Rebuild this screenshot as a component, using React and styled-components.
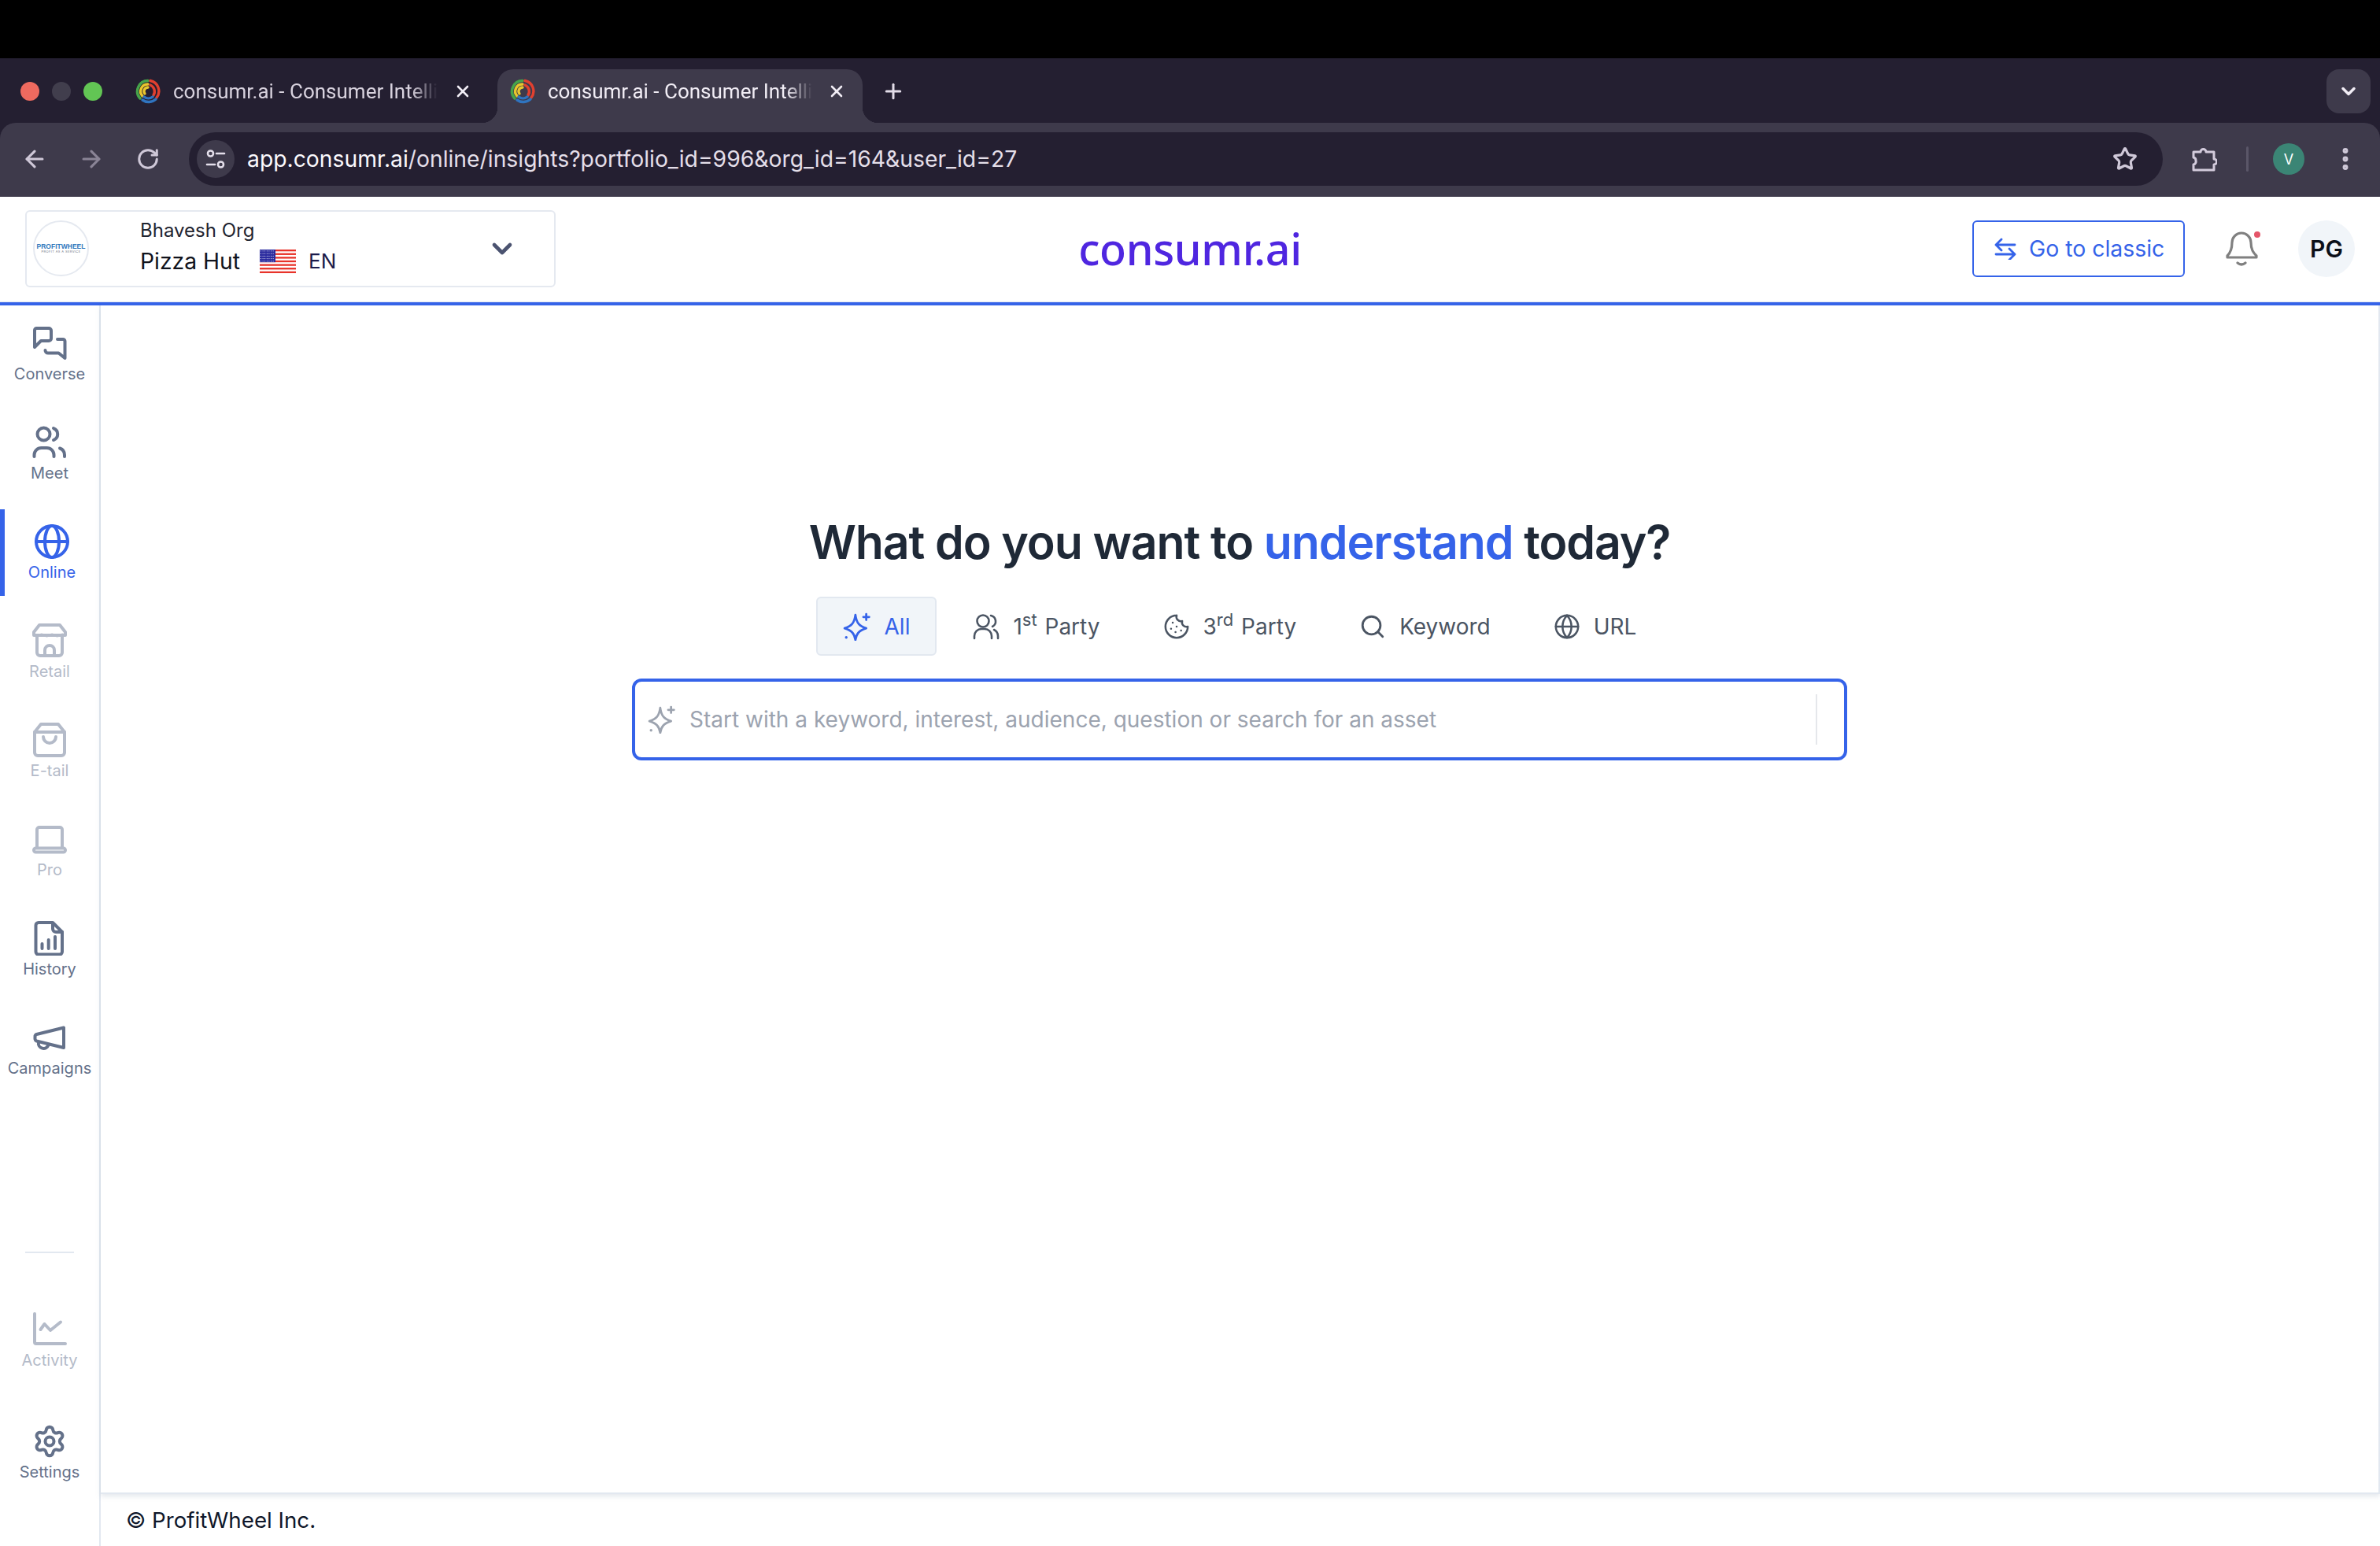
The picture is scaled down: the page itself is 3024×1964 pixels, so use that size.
import styled, { createGlobalStyle } from 'styled-components';
import { ArrowLeft, ArrowRight, ChevronDown, Cookie, EllipsisVertical, Globe, Plus, RotateCw, Search, Settings, Star, X } from 'lucide-react';

const GlobalStyle = createGlobalStyle`
  html, body {
    margin: 0;
    padding: 0;
    background: #fff;
  }
  * {
    box-sizing: border-box;
  }
`;

const SPage = styled.div`
  width: 3024px;
  height: 1964px;
  display: flex;
  flex-direction: column;
  overflow: hidden;
  font-family: Inter, 'Liberation Sans', sans-serif;
  color: #0f172a;
`;
const SBlackBar = styled.div`
  height: 74px;
  background: #000;
  flex: none;
`;

/* browser chrome */
const STabStrip = styled.div`
  height: 82px;
  flex: none;
  display: flex;
  align-items: flex-start;
  padding-top: 14px;
  background: #241f31;
`;
const SLights = styled.div`
  height: 56px;
  width: 130px;
  padding-left: 26px;
  display: flex;
  align-items: center;
  gap: 16px;
  flex: none;
`;
const SLight = styled.span`
  width: 24px;
  height: 24px;
  border-radius: 50%;
  background: ${(p) => p.$color};
`;
const STab = styled.div`
  position: relative;
  height: 68px;
  width: ${(p) => (p.$active ? '464px' : '476px')};
  margin-left: ${(p) => (p.$active ? '0' : '26px')};
  padding: 0 ${(p) => (p.$active ? '21px' : '32px')} 12px 16px;
  display: flex;
  align-items: center;
  flex: none;
  border-radius: 20px 20px 0 0;
  background: ${(p) => (p.$active ? '#3e3a4b' : 'transparent')};
  color: ${(p) => (p.$active ? '#f1edf5' : '#d8d2de')};
  &::after {
    content: '';
    display: ${(p) => (p.$active ? 'block' : 'none')};
    position: absolute;
    right: -20px;
    bottom: 0;
    width: 20px;
    height: 20px;
    background: radial-gradient(circle at 100% 0, transparent 20px, #3e3a4b 20.5px);
  }
  &::before {
    content: '';
    display: ${(p) => (p.$active ? 'block' : 'none')};
    position: absolute;
    left: -20px;
    bottom: 0;
    width: 20px;
    height: 20px;
    background: radial-gradient(circle at 0 0, transparent 20px, #3e3a4b 20.5px);
  }
`;
const STabTitle = styled.span`
  width: 336px;
  margin-left: 16px;
  white-space: nowrap;
  font-family: Roboto, Inter, sans-serif;
  font-size: 26px;
  line-height: 32px;
  mask-image: linear-gradient(to right, #000 90%, transparent);
`;
const STabClose = styled.span`
  margin-left: auto;
  width: 24px;
  height: 24px;
  display: flex;
  align-items: center;
  justify-content: center;
  color: #f1edf5;
`;
const SNewTab = styled.span`
  height: 56px;
  margin-left: 24px;
  display: flex;
  align-items: center;
  color: #e2dce8;
`;
const STabMenu = styled.span`
  width: 56px;
  height: 56px;
  margin: 0 12px 0 auto;
  border-radius: 16px;
  background: #3e3a4b;
  color: #f1edf5;
  display: flex;
  align-items: center;
  justify-content: center;
`;
const SToolbarBack = styled.div`
  height: 94px;
  flex: none;
  background: #241f31;
`;
const SToolbar = styled.div`
  height: 94px;
  display: flex;
  align-items: center;
  padding: 0 0 2px 20px;
  background: #3e3a4b;
  border-radius: 20px 20px 0 0;
  color: #cfc8d8;
`;
const SNavButton = styled.span`
  width: 48px;
  margin-right: 24px;
  display: flex;
  justify-content: center;
  color: ${(p) => (p.$dim ? '#8a8496' : '#cfc8d8')};
`;
const SUrlPill = styled.div`
  flex: 1;
  height: 68px;
  margin-left: 4px;
  padding: 0 32px 0 10px;
  display: flex;
  align-items: center;
  border-radius: 34px;
  background: #241f31;
`;
const SSiteButton = styled.span`
  width: 48px;
  height: 48px;
  border-radius: 50%;
  background: #3e3a4b;
  display: flex;
  align-items: center;
  justify-content: center;
  flex: none;
`;
const SUrl = styled.span`
  margin-left: 16px;
  font-size: 28.3px;
  color: #e4dfe9;
  white-space: nowrap;
  b {
    font-weight: 400;
    color: #fbf9fd;
  }
`;
const SStar = styled.span`
  margin-left: auto;
  display: flex;
`;
const SToolIcons = styled.div`
  display: flex;
  align-items: center;
  padding: 0 24px 0 33px;
  flex: none;
`;
const SToolSlot = styled.span`
  width: 40px;
  display: flex;
  justify-content: center;
`;
const SToolDivider = styled.span`
  width: 3px;
  height: 32px;
  margin: 0 31px 0 33px;
  border-radius: 2px;
  background: #5a5668;
`;
const SProfile = styled.span`
  width: 40px;
  height: 40px;
  margin-right: 32px;
  border-radius: 50%;
  background: #3b8575;
  color: #fff;
  font-size: 18px;
  display: flex;
  align-items: center;
  justify-content: center;
`;

/* app header */
const SHeader = styled.header`
  height: 138px;
  flex: none;
  display: grid;
  grid-template-columns: 1fr auto 1fr;
  align-items: center;
  padding: 0 32px 3px;
  border-bottom: 4px solid #3563e9;
  box-shadow: inset 0 -1px 0 #e2e8f0;
`;
const SOrgPicker = styled.div`
  width: 674px;
  height: 98px;
  padding: 0 46px 0 8px;
  display: flex;
  align-items: center;
  border: 2px solid #e5e9f0;
  border-radius: 6px;
`;
const SOrgLogo = styled.div`
  width: 71px;
  height: 71px;
  flex: none;
  border: 2px solid #e5e9f0;
  border-radius: 50%;
  display: flex;
  flex-direction: column;
  align-items: center;
  justify-content: center;
  line-height: 1;
`;
const SOrgLogoName = styled.span`
  font-family: 'Liberation Sans', sans-serif;
  font-size: 8.5px;
  font-weight: 700;
  color: #2f78bd;
`;
const SOrgLogoTag = styled.span`
  font-size: 4px;
  letter-spacing: 0.4px;
  color: #6b7280;
  margin-top: 1px;
`;
const SOrgText = styled.div`
  margin: -4px 0 0 65px;
  display: flex;
  flex-direction: column;
  gap: 8px;
`;
const SOrgName = styled.span`
  font-size: 24px;
  line-height: 28px;
  color: #1f2430;
`;
const SBrandRow = styled.span`
  display: flex;
  align-items: center;
  font-size: 28.3px;
  line-height: 34px;
  color: #11131c;
`;
const SFlag = styled.svg`
  width: 46px;
  height: 30px;
  margin: 0 16px 0 25px;
`;
const SLang = styled.span`
  font-size: 26px;
  color: #1b1b4b;
`;
const SOrgChevron = styled.span`
  margin-left: auto;
  display: flex;
  color: #4b5370;
`;
const SLogo = styled.div`
  font-family: 'Noto Sans', Inter, sans-serif;
  font-size: 55.5px;
  font-weight: 500;
  letter-spacing: -0.3px;
  color: #4f26e0;
  line-height: 1;
`;
const SHeaderActions = styled.div`
  display: flex;
  justify-content: flex-end;
  align-items: center;
  gap: 50px;
`;
const SClassicButton = styled.button`
  width: 270px;
  height: 72px;
  padding: 0 0 0 26px;
  display: flex;
  align-items: center;
  gap: 16px;
  border: 2px solid #3563e9;
  border-radius: 6px;
  background: #fff;
  color: #3563e9;
  font-family: inherit;
  font-size: 28.4px;
`;
const SBell = styled.span`
  display: flex;
  width: 44px;
  margin-left: 2px;
  margin-right: -2px;
`;
const SAvatar = styled.span`
  width: 72px;
  height: 72px;
  border-radius: 50%;
  background: #f1f5f9;
  color: #0b0f19;
  font-size: 30px;
  font-weight: 600;
  display: flex;
  align-items: center;
  justify-content: center;
`;

/* body */
const SBody = styled.div`
  flex: 1;
  display: flex;
  min-height: 0;
`;
const SSidebar = styled.nav`
  width: 128px;
  flex: none;
  display: flex;
  flex-direction: column;
  padding: 7px 0 64px;
  border-right: 2px solid #e2e8f0;
`;
const SNavGroup = styled.div`
  display: flex;
  flex-direction: column;
  gap: ${(p) => p.$gap}px;
`;
const SNavItem = styled.a`
  height: 110px;
  display: flex;
  flex-direction: column;
  align-items: center;
  padding-top: 19px;
  border-left: ${(p) => (p.$state === 'active' ? '6px solid #3563e9' : '0')};
  color: ${(p) => (p.$state === 'active' ? '#3563e9' : p.$state === 'disabled' ? '#b4bbc9' : '#64718a')};
`;
const SNavLabel = styled.span`
  margin-top: 5px;
  font-size: 20px;
  line-height: 24px;
  white-space: nowrap;
`;
const SNavDivider = styled.div`
  width: 62px;
  height: 2px;
  margin: auto 0 56px 32px;
  background: #e2e8f0;
`;
const SMain = styled.main`
  flex: 1;
  display: flex;
  flex-direction: column;
  min-width: 0;
`;
const SContent = styled.section`
  flex: 1;
  display: flex;
  flex-direction: column;
  align-items: center;
  padding-top: 265px;
  border-right: 2px solid #e2e8f0;
  border-bottom: 2px solid #e2e8f0;
  box-shadow: 0 3px 6px rgba(148, 163, 184, 0.25);
`;
const STitle = styled.h1`
  margin: 0;
  font-size: 59px;
  line-height: 72px;
  font-weight: 600;
  letter-spacing: -1.1px;
  color: #1f2937;
  span {
    color: #3563e9;
  }
`;
const SModes = styled.div`
  margin-top: 33px;
  display: flex;
  align-items: center;
  gap: 12px;
`;
const SMode = styled.div`
  height: 75px;
  padding: 0 32px;
  display: flex;
  align-items: center;
  gap: 17px;
  border: 2px solid ${(p) => (p.$active ? '#e2e8f0' : 'transparent')};
  border-radius: 6px;
  background: ${(p) => (p.$active ? '#f1f5f9' : 'transparent')};
  color: ${(p) => (p.$active ? '#3563e9' : '#4b5563')};
  font-size: 28px;
  sup {
    font-size: 22px;
    line-height: 0;
    margin-right: 2px;
  }
`;
const SSearch = styled.div`
  width: 1544px;
  height: 104px;
  margin-top: 29px;
  padding: 0 34px 0 16px;
  display: flex;
  align-items: center;
  border: 4px solid #3563e9;
  border-radius: 12px;
  color: #9ca3af;
`;
const SPlaceholder = styled.span`
  margin-left: 17px;
  font-size: 28px;
  white-space: nowrap;
`;
const SSearchDivider = styled.span`
  margin-left: auto;
  width: 2px;
  height: 64px;
  background: #e5e7eb;
`;
const SFooter = styled.footer`
  height: 66px;
  flex: none;
  padding-left: 32px;
  display: flex;
  align-items: center;
  font-size: 27.7px;
  color: #0f172a;
`;

function Favicon() {
  return (
    <svg width="32" height="32" viewBox="0 0 32 32" fill="none" strokeWidth="3.400" strokeLinecap="round">
      <path d="M6 25A13.500 13.500 0 0 1 16 2.500" stroke="#46a34a" />
      <path d="M19 2.500A13.500 13.500 0 0 1 27 24" stroke="#e2402f" />
      <path d="M26 26A13.500 13.500 0 0 1 9 27" stroke="#2f74c0" />
      <path d="M9 22A9 9 0 0 1 16 7" stroke="#e8c62d" />
      <path d="M19 8A9 9 0 0 1 23 21" stroke="#e2402f" />
      <path d="M22 23A9 9 0 0 1 11 23" stroke="#2f74c0" />
      <path d="M12 19A5 5 0 0 1 16 11" stroke="#e8c62d" />
    </svg>
  );
}

function SiteControls() {
  return (
    <svg width="26" height="26" viewBox="0 0 26 26" fill="none" stroke="#e3deea" strokeWidth="2.600" strokeLinecap="round">
      <circle cx="6.500" cy="6" r="3.500" />
      <path d="M14 6h10" />
      <circle cx="19.500" cy="20" r="3.500" />
      <path d="M2 20h10" />
    </svg>
  );
}

function Extension() {
  return (
    <svg width="32" height="32" viewBox="0 0 32 32" fill="none" stroke="#d3cbdc" strokeWidth="3" strokeLinejoin="round">
      <path d="M2 7h9a3.500 3.500 0 0 1 7 0h10v9a3.500 3.500 0 0 1 0 7v7H2v-7a4 4 0 0 0 3-5 4 4 0 0 0-3-4z" />
    </svg>
  );
}

function UsFlag() {
  const stripes = [0, 2, 4, 6, 8, 10, 12];
  const dots = [];
  for (let row = 0; row < 5; row += 1) {
    for (let col = 0; col < 7; col += 1) {
      dots.push(<circle key={`${row}-${col}`} cx={1.500 + col * 2.600} cy={1.600 + row * 2.800} r="0.550" fill="#fff" />);
    }
  }
  return (
    <SFlag viewBox="0 0 46 26" preserveAspectRatio="none">
      <rect width="46" height="26" fill="#fff" />
      {stripes.map((i) => (
        <rect key={i} y={i * 2} width="46" height="2" fill="#e8332a" />
      ))}
      <rect width="20" height="14" fill="#2a2a9e" />
      {dots}
    </SFlag>
  );
}

function SwapArrows() {
  return (
    <svg width="28" height="28" viewBox="0 0 28 28" fill="none" stroke="currentColor" strokeWidth="2.800" strokeLinecap="round" strokeLinejoin="round">
      <path d="M26 9H3M9 2 2 9l7 7" />
      <path d="M2 21h23M19 14l7 7-7 7" />
    </svg>
  );
}

function Bell() {
  return (
    <svg width="44" height="46" viewBox="0 0 44 46" fill="none" stroke="#808080" strokeWidth="3.200" strokeLinecap="round" strokeLinejoin="round">
      <path d="M20 3a12 12 0 0 1 12 12c0 9 3 13 7 17v2H2v-2c4-4 6-8 6-17A12 12 0 0 1 20 3z" />
      <path d="M15 41q5 4 10 0" />
      <circle cx="40" cy="5" r="4" fill="#e5566a" stroke="none" />
    </svg>
  );
}

function Sparkle({ size }) {
  return (
    <svg width={size} height={size} viewBox="0 0 34 34" fill="none" stroke="currentColor" strokeWidth="2.600" strokeLinejoin="round" strokeLinecap="round">
      <path d="M15 3c1.200 9.500 4.500 13.500 13 16-8.500 2.500-11.800 6.500-13 14-1.200-7.500-4.500-11.500-13-14 8.500-2.500 11.800-6.500 13-16z" />
      <path d="M28 2v7M24.500 5.500h7" />
      <circle cx="4" cy="30" r="1.600" fill="currentColor" stroke="none" />
    </svg>
  );
}

function PartyUsers() {
  return (
    <svg width="34" height="34" viewBox="0 0 34 34" fill="none" stroke="currentColor" strokeWidth="2.600" strokeLinecap="round">
      <circle cx="13" cy="10" r="7.500" />
      <path d="M2 32v-3a9 9 0 0 1 9-9h4a9 9 0 0 1 9 9v3" />
      <path d="M23 3a7.500 7.500 0 0 1 2 14M27 21a9 9 0 0 1 5 8v3" />
    </svg>
  );
}

const NAV_PATHS = {
  converse: (
    <>
      <path d="M3 5.500A2.500 2.500 0 0 1 5.500 3H21a3 3 0 0 1 3 3v10a3 3 0 0 1-3 3H11l-8 8z" />
      <path d="M32 17h7a2.500 2.500 0 0 1 2.500 2.500V41l-8-6.500H20a3.500 3.500 0 0 1-3.500-3.500" />
    </>
  ),
  meet: (
    <>
      <circle cx="14.500" cy="11.500" r="8" />
      <path d="M2.500 40v-2a9 9 0 0 1 9-9h7a9 9 0 0 1 9 9v2" />
      <path d="M27 4a8 8 0 0 1 0 15" />
      <path d="M35 29.500a9 9 0 0 1 6 8.500v2" />
    </>
  ),
  online: (
    <>
      <circle cx="22" cy="22" r="20" />
      <ellipse cx="22" cy="22" rx="9" ry="20" />
      <path d="M2 22h40" />
    </>
  ),
  retail: (
    <>
      <path d="M9 2h26l7 9v4H2v-4z" />
      <path d="M2 15q3.300 3 6.600 0t6.600 0 6.600 0 6.600 0 6.600 0 6.600 0" strokeWidth="2" />
      <path d="M6 17v20a4 4 0 0 0 4 4h24a4 4 0 0 0 4-4V17" />
      <path d="M16 41v-7a6 6 0 0 1 12 0v7" />
    </>
  ),
  etail: (
    <>
      <path d="M11 2h22l8 10v26a4 4 0 0 1-4 4H7a4 4 0 0 1-4-4V12z" />
      <path d="M3 12h38" />
      <path d="M14 18a8 8 0 0 0 16 0" />
    </>
  ),
  pro: (
    <>
      <path d="M6 33V10a3 3 0 0 1 3-3h26a3 3 0 0 1 3 3v23" />
      <path d="M2 36a2.500 2.500 0 0 1 2.500-2.500h35a2.500 2.500 0 0 1 0 5h-35A2.500 2.500 0 0 1 2 36z" />
    </>
  ),
  history: (
    <>
      <path d="M8 2h18l12 12v25a3.500 3.500 0 0 1-3.500 3.500H8A3.500 3.500 0 0 1 4.500 39V5.500A3.500 3.500 0 0 1 8 2z" />
      <path d="M26 3v7a4 4 0 0 0 4 4h8" />
      <path d="M12.500 29v6M20.700 24v11M29 20v15" />
    </>
  ),
  campaigns: (
    <>
      <path d="M40 9.500V35L5.500 26.500a3 3 0 0 1-2-2.500v-3a3 3 0 0 1 2-3z" />
      <path d="M8 28a6.500 6.500 0 0 0 12.500 3.500" />
    </>
  ),
  activity: (
    <>
      <path d="M3 2v36a2 2 0 0 0 2 2h37" />
      <path d="m10.500 22 5-7 7.500 8 13-10.500" />
    </>
  ),
};

function NavGlyph({ name }) {
  if (name === 'settings') {
    return <Settings size={44} strokeWidth={2.200} />;
  }
  return (
    <svg width="44" height="44" viewBox="0 0 44 44" fill="none" stroke="currentColor" strokeWidth="4" strokeLinecap="round" strokeLinejoin="round">
      {NAV_PATHS[name]}
    </svg>
  );
}

const NAV_ITEMS = [
  { name: 'converse', label: 'Converse', state: 'normal' },
  { name: 'meet', label: 'Meet', state: 'normal' },
  { name: 'online', label: 'Online', state: 'active' },
  { name: 'retail', label: 'Retail', state: 'disabled' },
  { name: 'etail', label: 'E-tail', state: 'disabled' },
  { name: 'pro', label: 'Pro', state: 'disabled' },
  { name: 'history', label: 'History', state: 'normal' },
  { name: 'campaigns', label: 'Campaigns', state: 'normal' },
];
const NAV_BOTTOM = [
  { name: 'activity', label: 'Activity', state: 'disabled' },
  { name: 'settings', label: 'Settings', state: 'normal' },
];

function NavEntry({ item }) {
  return (
    <SNavItem $state={item.state}>
      <NavGlyph name={item.name} />
      <SNavLabel>{item.label}</SNavLabel>
    </SNavItem>
  );
}

function BrowserTab({ active }) {
  return (
    <STab $active={active}>
      <Favicon />
      <STabTitle>consumr.ai - Consumer Intelli</STabTitle>
      <STabClose>
        <X size={24} strokeWidth={2.600} />
      </STabClose>
    </STab>
  );
}

function App() {
  return (
    <SPage>
      <GlobalStyle />
      <SBlackBar />
      <STabStrip>
        <SLights>
          <SLight $color="#ee6a5f" />
          <SLight $color="#413e4d" />
          <SLight $color="#62c554" />
        </SLights>
        <BrowserTab />
        <BrowserTab active />
        <SNewTab>
          <Plus size={30} strokeWidth={2.400} />
        </SNewTab>
        <STabMenu>
          <ChevronDown size={28} strokeWidth={3} />
        </STabMenu>
      </STabStrip>
      <SToolbarBack>
        <SToolbar>
          <SNavButton>
            <ArrowLeft size={34} strokeWidth={2.200} />
          </SNavButton>
          <SNavButton $dim>
            <ArrowRight size={34} strokeWidth={2.200} />
          </SNavButton>
          <SNavButton>
            <RotateCw size={30} strokeWidth={2.400} />
          </SNavButton>
          <SUrlPill>
            <SSiteButton>
              <SiteControls />
            </SSiteButton>
            <SUrl>
              <b>app.consumr.ai</b>/online/insights?portfolio_id=996&org_id=164&user_id=27
            </SUrl>
            <SStar>
              <Star size={32} strokeWidth={2.400} />
            </SStar>
          </SUrlPill>
          <SToolIcons>
            <SToolSlot>
              <Extension />
            </SToolSlot>
            <SToolDivider />
            <SProfile>V</SProfile>
            <SToolSlot>
              <EllipsisVertical size={36} strokeWidth={2.600} />
            </SToolSlot>
          </SToolIcons>
        </SToolbar>
      </SToolbarBack>
      <SHeader>
        <SOrgPicker>
          <SOrgLogo>
            <SOrgLogoName>PROFITWHEEL</SOrgLogoName>
            <SOrgLogoTag>PROFIT AS A SERVICE</SOrgLogoTag>
          </SOrgLogo>
          <SOrgText>
            <SOrgName>Bhavesh Org</SOrgName>
            <SBrandRow>
              Pizza Hut
              <UsFlag />
              <SLang>EN</SLang>
            </SBrandRow>
          </SOrgText>
          <SOrgChevron>
            <ChevronDown size={40} strokeWidth={2.800} />
          </SOrgChevron>
        </SOrgPicker>
        <SLogo>consumr.ai</SLogo>
        <SHeaderActions>
          <SClassicButton>
            <SwapArrows />
            Go to classic
          </SClassicButton>
          <SBell>
            <Bell />
          </SBell>
          <SAvatar>PG</SAvatar>
        </SHeaderActions>
      </SHeader>
      <SBody>
        <SSidebar>
          <SNavGroup $gap={16}>
            {NAV_ITEMS.map((item) => (
              <NavEntry key={item.name} item={item} />
            ))}
          </SNavGroup>
          <SNavDivider />
          <SNavGroup $gap={32}>
            {NAV_BOTTOM.map((item) => (
              <NavEntry key={item.name} item={item} />
            ))}
          </SNavGroup>
        </SSidebar>
        <SMain>
          <SContent>
            <STitle>
              What do you want to <span>understand</span> today?
            </STitle>
            <SModes>
              <SMode $active>
                <Sparkle size={36} />
                All
              </SMode>
              <SMode>
                <PartyUsers />
                <span>
                  1<sup>st</sup> Party
                </span>
              </SMode>
              <SMode>
                <Cookie size={34} strokeWidth={1.800} />
                <span>
                  3<sup>rd</sup> Party
                </span>
              </SMode>
              <SMode>
                <Search size={34} strokeWidth={2} />
                Keyword
              </SMode>
              <SMode>
                <Globe size={34} strokeWidth={1.800} />
                URL
              </SMode>
            </SModes>
            <SSearch>
              <Sparkle size={36} />
              <SPlaceholder>Start with a keyword, interest, audience, question or search for an asset</SPlaceholder>
              <SSearchDivider />
            </SSearch>
          </SContent>
          <SFooter>© ProfitWheel Inc.</SFooter>
        </SMain>
      </SBody>
    </SPage>
  );
}

export default App;
